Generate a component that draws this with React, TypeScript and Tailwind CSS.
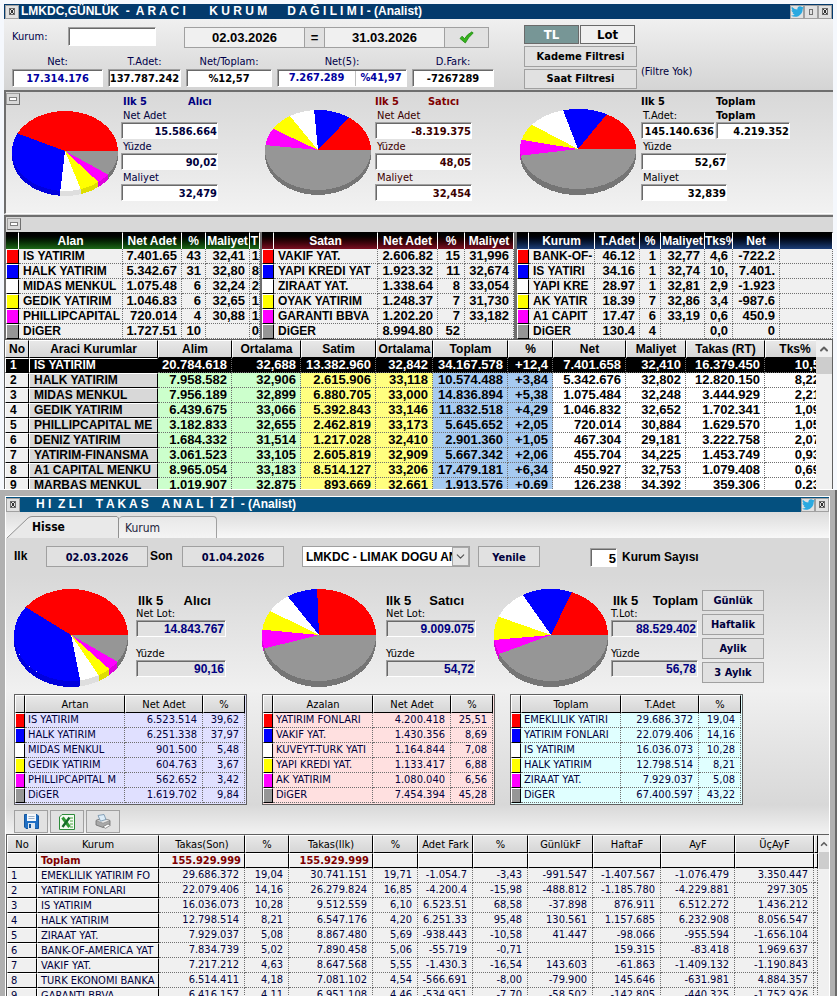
import React, { useState } from 'react';
import { FaTwitter } from 'react-icons/fa';
import { ChevronDown, ChevronUp } from 'lucide-react';

type Row = string[];

const sliceColors = ['#ff0000', '#0000ff', '#ffffff', '#ffff00', '#ff00ff', '#969696'];
const rimColors = ['#dd0000', '#0000dd', '#dedede', '#dede00', '#dd00dd', '#757575'];
const swatches = ['bg-[#ff0000]', 'bg-[#0000ff]', 'bg-white', 'bg-[#ffff00]', 'bg-[#ff00ff]', 'bg-[#969696]'];

const buyers: Row[] = [
  ['IS YATIRIM', '7.401.65', '43', '32,41', '1'],
  ['HALK YATIRIM', '5.342.67', '31', '32,80', '8'],
  ['MIDAS MENKUL', '1.075.48', '6', '32,24', '2'],
  ['GEDIK YATIRIM', '1.046.83', '6', '32,65', '1'],
  ['PHILLIPCAPITAL', '720.014', '4', '30,88', '1'],
  ['DiGER', '1.727.51', '10', '', '0'],
];

const sellers: Row[] = [
  ['VAKIF YAT.', '2.606.82', '15', '31,996'],
  ['YAPI KREDI YAT', '1.923.32', '11', '32,674'],
  ['ZIRAAT YAT.', '1.338.64', '8', '33,054'],
  ['OYAK YATIRIM', '1.248.37', '7', '31,730'],
  ['GARANTI BBVA', '1.202.20', '7', '33,182'],
  ['DiGER', '8.994.80', '52', ''],
];

const totals: Row[] = [
  ['BANK-OF-', '46.12', '1', '32,77', '4,6', '-722.2', ''],
  ['IS YATIRI', '34.16', '1', '32,74', '10,', '7.401.', ''],
  ['YAPI KRE', '28.97', '1', '32,81', '2,9', '-1.923', ''],
  ['AK YATIR', '18.39', '7', '32,86', '3,4', '-987.6', ''],
  ['A1 CAPIT', '17.47', '6', '33,19', '0,6', '450.9', ''],
  ['DiGER', '130.4', '4', '', '0,0', '0', ''],
];

const brokers: Row[] = [
  ['1', 'IS YATIRIM', '20.784.618', '32,688', '13.382.960', '32,842', '34.167.578', '+12,4', '7.401.658', '32,410', '16.379.450', '10,5'],
  ['2', 'HALK YATIRIM', '7.958.582', '32,906', '2.615.906', '33,118', '10.574.488', '+3,84', '5.342.676', '32,802', '12.820.150', '8,22'],
  ['3', 'MIDAS MENKUL', '7.956.189', '32,899', '6.880.705', '33,000', '14.836.894', '+5,38', '1.075.484', '32,248', '3.444.929', '2,21'],
  ['4', 'GEDIK YATIRIM', '6.439.675', '33,066', '5.392.843', '33,146', '11.832.518', '+4,29', '1.046.832', '32,652', '1.702.341', '1,09'],
  ['5', 'PHILLIPCAPITAL ME', '3.182.833', '32,655', '2.462.819', '33,173', '5.645.652', '+2,05', '720.014', '30,884', '1.629.570', '1,05'],
  ['6', 'DENIZ YATIRIM', '1.684.332', '31,514', '1.217.028', '32,410', '2.901.360', '+1,05', '467.304', '29,181', '3.222.758', '2,07'],
  ['7', 'YATIRIM-FINANSMA', '3.061.523', '33,105', '2.605.819', '32,909', '5.667.342', '+2,06', '455.704', '34,225', '1.453.749', '0,93'],
  ['8', 'A1 CAPITAL MENKU', '8.965.054', '33,183', '8.514.127', '33,206', '17.479.181', '+6,34', '450.927', '32,753', '1.079.408', '0,69'],
  ['9', 'MARBAS MENKUL', '1.019.907', '32,875', '893.669', '32,661', '1.913.576', '+0,69', '126.238', '34,392', '359.306', '0,23'],
];

const increased: Row[] = [
  ['IS YATIRIM', '6.523.514', '39,62'],
  ['HALK YATIRIM', '6.251.338', '37,97'],
  ['MIDAS MENKUL', '901.500', '5,48'],
  ['GEDIK YATIRIM', '604.763', '3,67'],
  ['PHILLIPCAPITAL M', '562.652', '3,42'],
  ['DiGER', '1.619.702', '9,84'],
];

const decreased: Row[] = [
  ['YATIRIM FONLARI', '4.200.418', '25,51'],
  ['VAKIF YAT.', '1.430.356', '8,69'],
  ['KUVEYT-TURK YATI', '1.164.844', '7,08'],
  ['YAPI KREDI YAT.', '1.133.417', '6,88'],
  ['AK YATIRIM', '1.080.040', '6,56'],
  ['DiGER', '7.454.394', '45,28'],
];

const holdings: Row[] = [
  ['EMEKLILIK YATIRI', '29.686.372', '19,04'],
  ['YATIRIM FONLARI', '22.079.406', '14,16'],
  ['IS YATIRIM', '16.036.073', '10,28'],
  ['HALK YATIRIM', '12.798.514', '8,21'],
  ['ZIRAAT YAT.', '7.929.037', '5,08'],
  ['DiGER', '67.400.597', '43,22'],
];

const custody: Row[] = [
  ['1', 'EMEKLILIK YATIRIM FO', '29.686.372', '19,04', '30.741.151', '19,71', '-1.054.7', '-3,43', '-991.547', '-1.407.567', '-1.076.479', '3.350.447', ''],
  ['2', 'YATIRIM FONLARI', '22.079.406', '14,16', '26.279.824', '16,85', '-4.200.4', '-15,98', '-488.812', '-1.185.780', '-4.229.881', '297.305', ''],
  ['3', 'IS YATIRIM', '16.036.073', '10,28', '9.512.559', '6,10', '6.523.51', '68,58', '-37.898', '876.911', '6.512.272', '1.436.212', ''],
  ['4', 'HALK YATIRIM', '12.798.514', '8,21', '6.547.176', '4,20', '6.251.33', '95,48', '130.561', '1.157.685', '6.232.908', '8.056.547', ''],
  ['5', 'ZIRAAT YAT.', '7.929.037', '5,08', '8.867.480', '5,69', '-938.443', '-10,58', '41.447', '-98.066', '-955.594', '-1.656.104', ''],
  ['6', 'BANK-OF-AMERICA YAT', '7.834.739', '5,02', '7.890.458', '5,06', '-55.719', '-0,71', '', '159.315', '-83.418', '1.969.637', ''],
  ['7', 'VAKIF YAT.', '7.217.212', '4,63', '8.647.568', '5,55', '-1.430.3', '-16,54', '143.603', '-61.863', '-1.409.132', '-1.190.843', ''],
  ['8', 'TURK EKONOMI BANKA', '6.514.411', '4,18', '7.081.102', '4,54', '-566.691', '-8,00', '-79.900', '145.646', '-631.981', '4.884.357', ''],
  ['9', 'GARANTI BBVA', '6.416.157', '4,11', '6.951.108', '4,46', '-534.951', '-7,70', '-58.502', '-142.805', '-440.325', '-1.752.926', ''],
];

interface PieProps {
  values: number[];
  rx: number;
  ry: number;
  depth: number;
}

// Tilted pie, slices run counterclockwise from three o'clock
const Pie: React.FC<PieProps> = ({ values, rx, ry, depth }) => {
  const sum = values.reduce((a, b) => a + b, 0);
  const pt = (a: number, dy = 0) => `${(rx + rx * Math.cos(a)).toFixed(2)} ${(ry - ry * Math.sin(a) + dy).toFixed(2)}`;
  let angle = 0;
  const slices = values.map((v, i) => {
    const from = angle;
    angle += (v / sum) * Math.PI * 2;
    const to = angle;
    const large = to - from > Math.PI ? 1 : 0;
    const rimFrom = Math.max(from, Math.PI);
    return {
      face: `M${rx} ${ry} L${pt(from)} A${rx} ${ry} 0 ${large} 0 ${pt(to)} Z`,
      rim:
        to > Math.PI
          ? `M${pt(rimFrom)} A${rx} ${ry} 0 0 0 ${pt(to)} L${pt(to, depth)} A${rx} ${ry} 0 0 1 ${pt(rimFrom, depth)} Z`
          : '',
      color: sliceColors[i],
      rimColor: rimColors[i],
    };
  });

  return (
    <svg width={rx * 2} height={ry * 2 + depth} className="shrink-0" shapeRendering="crispEdges" aria-hidden="true">
      {slices.map((s) => s.rim && <path key={s.color} d={s.rim} fill={s.rimColor} />)}
      {slices.map((s) => (
        <path key={s.color} d={s.face} fill={s.color} />
      ))}
    </svg>
  );
};

const sunken = 'border border-t-[#a0a0a0] border-l-[#a0a0a0] border-b-white border-r-white shadow-[inset_1px_1px_0_#696969] pt-px';
const flatButton = 'border border-[#a0a0a0] bg-[#e1e1e1]';

const WindowButton: React.FC<{ label: string; children: React.ReactNode }> = ({ label, children }) => (
  <button aria-label={label} className="flex h-[14px] w-[14px] items-center justify-center border border-[#a0a0a0] bg-[#e1e1e1]">
    {children}
  </button>
);

const CloseGlyph = () => (
  <svg width="6" height="7" viewBox="0 0 6 7" shapeRendering="crispEdges">
    <rect x="0.5" y="0.5" width="5" height="6" fill="none" stroke="#6b6b6b" />
    <path d="M1 1L5 6M5 1L1 6" stroke="#333" strokeWidth="1" />
  </svg>
);

const CollapseButton = () => (
  <button aria-label="Daralt" className="flex h-[12px] w-[14px] items-center justify-center border border-t-[#a0a0a0] border-l-[#a0a0a0] border-b-[#707070] border-r-[#707070] bg-[#d8d8d8]">
    <span className="h-[4px] w-[8px] border border-[#808080] bg-white" />
  </button>
);

interface FieldProps {
  label: string;
  value: string;
  width: string;
  tone?: string;
}

const TopField: React.FC<FieldProps> = ({ label, value, width, tone = 'text-black' }) => (
  <label className={`flex flex-col items-center ${width}`}>
    <span className="h-[15px] text-[11px] leading-[16px] text-[#00004a]">{label}</span>
    <input readOnly value={value} className={`h-[18px] w-full bg-white text-center text-[11px] font-bold ${sunken} ${tone}`} />
  </label>
);

const StatField: React.FC<FieldProps> = ({ label, value, width, tone = 'text-black' }) => (
  <label className={`flex flex-col ${width} ${tone}`}>
    <span className="h-[14px] pl-[2px] text-[11px] leading-[16px]">{label}</span>
    <input readOnly value={value} className={`h-[17px] w-full bg-white text-right text-[11px] font-bold ${sunken}`} />
  </label>
);

const LotField: React.FC<FieldProps> = ({ label, value, width }) => (
  <label className={`flex flex-col ${width}`}>
    <span className="h-[14px] text-[11px] leading-[16px] text-black">{label}</span>
    <input readOnly value={value} className={`h-[17px] w-full bg-[#e1e1e1] pr-px text-right font-['Liberation_Sans',sans-serif] text-[12px] font-bold text-[#000080] ${sunken}`} />
  </label>
);

const ScrollBar: React.FC<{ width: string }> = ({ width }) => (
  <div className={`flex shrink-0 flex-col overflow-hidden bg-[#f0f0f0] ${width}`} aria-hidden="true">
    <div className="flex h-[17px] shrink-0 items-center justify-center">
      <ChevronUp size={12} strokeWidth={4} color="#606060" />
    </div>
    <div className="h-[17px] shrink-0 bg-[#cdcdcd]" />
  </div>
);

interface TopGridProps {
  heads: string[];
  cols: string[];
  rows: Row[];
  headClass: string;
}

const TopGrid: React.FC<TopGridProps> = ({ heads, cols, rows, headClass }) => (
  <table className="w-full table-fixed border-separate border-spacing-0 whitespace-nowrap bg-[#f0f0f0] font-['Liberation_Sans',sans-serif] font-bold text-black">
    <colgroup>
      {cols.map((c, i) => (
        <col key={i} className={c} />
      ))}
    </colgroup>
    <thead>
      <tr>
        <th className={`h-[17px] border-r border-t border-r-white border-t-black bg-linear-to-b p-0 ${headClass}`} />
        {heads.map((h, i) => (
          <th key={i} className={`h-[17px] overflow-hidden border-r border-t border-r-white border-t-black bg-linear-to-b p-0 text-[12px] leading-[15px] text-white ${headClass}`}>
            {h}
          </th>
        ))}
      </tr>
    </thead>
    <tbody>
      {rows.map((row, r) => (
        <tr key={r}>
          <td className={`border-b border-r border-l border-t border-black border-l-white border-t-white p-0 ${swatches[r]}`} />
          {row.map((cell, i) => (
            <td
              key={i}
              className={`h-[15px] overflow-hidden border-b border-r border-dotted border-[#707070] p-0 leading-[14px] ${
                i === 0 ? 'pl-1 text-left text-[12px]' : heads[i] === 'T' ? 'text-right text-[13px]' : 'pr-1 text-right text-[13px]'
              }`}
            >
              {cell}
            </td>
          ))}
        </tr>
      ))}
    </tbody>
  </table>
);

const brokerHeads = ['No', 'Araci Kurumlar', 'Alim', 'Ortalama', 'Satim', 'Ortalama', 'Toplam', '%', 'Net', 'Maliyet', 'Takas (RT)', 'Tks%'];
const brokerCols = ['w-[24px]', 'w-[129px]', 'w-[74px]', 'w-[69px]', 'w-[75px]', 'w-[57px]', 'w-[75px]', 'w-[45px]', 'w-[73px]', 'w-[60px]', 'w-[79px]', 'w-[60px]'];
const brokerFills = ['bg-[#f0f0f0]', 'bg-[#d8d8d8]', 'bg-[#ccffcc]', 'bg-[#ccffcc]', 'bg-[#ffff80]', 'bg-[#ffff80]', 'bg-[#a6caf0]', 'bg-[#a6caf0]', 'bg-white', 'bg-white', 'bg-white', 'bg-white'];

const headCell = 'h-[18px] overflow-hidden border-b border-r border-l border-t border-black border-l-white border-t-white bg-linear-to-b from-[#e8e8e8] to-[#d6d6d6] p-0';

const BrokerGrid = () => (
  <div className="flex h-[150px] overflow-hidden border-l border-r border-t border-[#606060] bg-white">
    <div className="min-w-0 flex-1 overflow-hidden">
      <table className="w-full min-w-[820px] table-fixed border-separate border-spacing-0 whitespace-nowrap font-['Liberation_Sans',sans-serif] font-bold text-black">
        <colgroup>
          {brokerCols.map((c, i) => (
            <col key={i} className={c} />
          ))}
        </colgroup>
        <thead>
          <tr>
            {brokerHeads.map((h, i) => (
              <th key={i} className={`text-[12px] leading-[15px] ${headCell}`}>
                {h}
              </th>
            ))}
          </tr>
        </thead>
        <tbody>
          {brokers.map((row, r) => (
            <tr key={row[0]}>
              {row.map((cell, i) => {
                const fill = r === 0 ? 'bg-black text-white' : brokerFills[i];
                return i < 2 ? (
                  <td key={i} className={`h-[15px] overflow-hidden border-b border-r border-l border-t border-black border-l-white border-t-white p-0 pl-1 text-[12px] leading-[13px] ${fill}`}>
                    {cell}
                  </td>
                ) : (
                  <td key={i} className={`h-[15px] overflow-hidden border-b border-r border-dotted border-[#707070] p-0 pr-1 text-right text-[13px] leading-[14px] ${fill}`}>
                    {cell}
                  </td>
                );
              })}
            </tr>
          ))}
        </tbody>
      </table>
    </div>
    <ScrollBar width="w-[16px]" />
  </div>
);

interface SmallGridProps {
  heads: string[];
  rows: Row[];
  fill: string;
}

const SmallGrid: React.FC<SmallGridProps> = ({ heads, rows, fill }) => (
  <div className={`w-[233px] border border-[#606060] pb-px pr-px ${fill}`}>
    <table className="w-full table-fixed border-separate border-spacing-0 whitespace-nowrap text-[11px] text-[#00003c]">
      <colgroup>
        <col className="w-[10px]" />
        <col className="w-[100px]" />
        <col className="w-[78px]" />
        <col className="w-[42px]" />
      </colgroup>
      <thead>
        <tr>
          <th className={headCell} />
          {heads.map((h) => (
            <th key={h} className={`font-normal leading-[15px] text-black ${headCell}`}>
              {h}
            </th>
          ))}
        </tr>
      </thead>
      <tbody>
        {rows.map((row, r) => (
          <tr key={row[0]}>
            <td className={`border-b border-r border-l border-t border-black border-l-white border-t-white p-0 ${swatches[r]}`} />
            {row.map((cell, i) => (
              <td key={i} className={`h-[15px] overflow-hidden border-b border-r border-dotted border-[#707070] p-0 leading-[14px] ${i === 0 ? 'pl-[3px]' : 'pr-[5px] text-right'}`}>
                {cell}
              </td>
            ))}
          </tr>
        ))}
      </tbody>
    </table>
  </div>
);

const custodyHeads = ['No', 'Kurum', 'Takas(Son)', '%', 'Takas(Ilk)', '%', 'Adet Fark', '%', 'GünlükF', 'HaftaF', 'AyF', 'ÜçAyF', ''];
const custodyCols = ['w-[30px]', 'w-[122px]', 'w-[86px]', 'w-[44px]', 'w-[84px]', 'w-[45px]', 'w-[55px]', 'w-[55px]', 'w-[65px]', 'w-[68px]', 'w-[74px]', 'w-[79px]', 'w-[4px]'];
const custodyTotal: Row = ['', 'Toplam', '155.929.999', '', '155.929.999', '', '', '', '', '', '', '', ''];

const CustodyGrid = () => (
  <div className="flex min-h-0 flex-1 overflow-hidden border-l border-t border-[#606060] bg-[#f0f0f0]">
    <div className="min-w-0 flex-1">
      <table className="w-full table-fixed border-separate border-spacing-0 whitespace-nowrap text-[11px] text-[#00003c]">
        <colgroup>
          {custodyCols.map((c, i) => (
            <col key={i} className={c} />
          ))}
        </colgroup>
        <thead>
          <tr>
            {custodyHeads.map((h, i) => (
              <th key={i} className={`font-normal leading-[15px] text-black ${headCell}`}>
                {h}
              </th>
            ))}
          </tr>
        </thead>
        <tbody>
          <tr className="font-bold text-[#800000]">
            {custodyTotal.map((cell, i) => (
              <td key={i} className={`h-[15px] overflow-hidden border-b border-r border-l border-t border-black border-l-white border-t-white p-0 leading-[13px] ${i < 2 ? 'pl-[3px]' : 'pr-[3px] text-right'}`}>
                {cell}
              </td>
            ))}
          </tr>
          {custody.map((row) => (
            <tr key={row[0]}>
              {row.map((cell, i) =>
                i < 2 ? (
                  <td key={i} className="h-[15px] overflow-hidden border-b border-r border-l border-t border-black border-l-white border-t-white p-0 pl-[3px] leading-[13px]">
                    {cell}
                  </td>
                ) : (
                  <td key={i} className="h-[15px] overflow-hidden border-b border-r border-dotted border-[#707070] p-0 pr-[5px] text-right leading-[14px]">
                    {cell}
                  </td>
                )
              )}
            </tr>
          ))}
        </tbody>
      </table>
    </div>
    <div className="w-px shrink-0" />
    <ScrollBar width="w-[10px]" />
  </div>
);

const BrokerWindow = () => {
  const [unit, setUnit] = useState('TL');

  return (
    <section className="mx-1 mt-1 border-b border-white bg-[#d8d8d8]">
      <header className="flex h-[15px] items-center bg-[#033a6c] px-px">
        <WindowButton label="Kapat">
          <CloseGlyph />
        </WindowButton>
        <h1 className="flex-1 whitespace-pre pl-[2px] font-['Liberation_Sans',sans-serif] text-[12px] font-bold leading-[15px] text-white">
          {'LMKDC,GÜNLÜK  -  A R A C I       K U R U M      D A Ğ I L I M I - (Analist)'}
        </h1>
        <WindowButton label="Paylaş">
          <FaTwitter size={13} color="#2aa9e0" className="shrink-0" />
        </WindowButton>
        <WindowButton label="Büyüt">
          <span className="h-[6px] w-[4px] border border-[#707070]" />
        </WindowButton>
        <WindowButton label="Pencereyi kapat">
          <CloseGlyph />
        </WindowButton>
      </header>

      {/* Query bar */}
      <div className="flex h-[71px] bg-linear-to-b from-[#f0f0f0] to-[#d4d4d4] pl-2 pt-[6px]">
        <div className="w-[512px] pt-[2px]">
          <div className="flex h-[21px]">
            <label className="flex w-[172px] text-[11px] text-[#00004a]">
              <span className="w-[56px] leading-[19px]">Kurum:</span>
              <input className={`h-[19px] w-[88px] bg-white px-1 ${sunken}`} />
            </label>
            <div className="flex font-['Liberation_Sans',sans-serif] text-[13px] font-bold text-black">
              <button className="w-[121px] border border-[#a0a0a0] bg-[#f0f0f0]">02.03.2026</button>
              <button className="w-[19px] border-y border-[#a0a0a0] bg-[#e1e1e1]">=</button>
              <button className="w-[121px] border border-[#a0a0a0] bg-[#f0f0f0]">31.03.2026</button>
              <button aria-label="Uygula" className="flex w-[44px] items-center justify-center border-y border-r border-[#a0a0a0] bg-[#e1e1e1]">
                <svg width="15" height="13" viewBox="0 0 15 13">
                  <path d="M1 7.5L3 5.2L5.6 7.6Q8.5 3 13 0.8L14.2 2Q9.2 6.4 6.3 12Z" fill="#35b21c" stroke="#1f8a10" strokeWidth="0.8" />
                </svg>
              </button>
            </div>
          </div>
          <div className="flex pt-[6px]">
            <TopField label="Net:" value="17.314.176" width="w-[91px]" tone="text-[#0000a0]" />
            <div className="w-[5px]" />
            <TopField label="T.Adet:" value="137.787.242" width="w-[73px]" />
            <div className="w-[5px]" />
            <TopField label="Net/Toplam:" value="%12,57" width="w-[86px]" />
            <div className="w-[5px]" />
            <div className="w-[130px] text-center">
              <label htmlFor="net5" className="block h-[15px] text-[11px] leading-[16px] text-[#00004a]">
                Net(5):
              </label>
              <div className={`flex h-[18px] bg-white text-[11px] font-bold text-[#0000a0] ${sunken}`}>
                <input id="net5" readOnly value="7.267.289" className="w-[78px] border-r border-[#c0c0c0] text-center" />
                <input aria-label="Net(5) yüzde" readOnly value="%41,97" className="w-[50px] text-center" />
              </div>
            </div>
            <div className="w-[5px]" />
            <TopField label="D.Fark:" value="-7267289" width="w-[82px]" />
          </div>
        </div>
        <div className="flex w-[113px] flex-col text-[11px] font-bold text-black">
          <div className="flex h-[19px] gap-px text-[13px] leading-[17px]">
            <button
              onClick={() => setUnit('TL')}
              className={`w-[55px] border border-[#6a6a6a] ${unit === 'TL' ? 'bg-[#779696] text-white' : 'bg-[#f0f0f0]'}`}
            >
              TL
            </button>
            <button
              onClick={() => setUnit('Lot')}
              className={`w-[55px] border border-[#6a6a6a] ${unit === 'Lot' ? 'bg-[#779696] text-white' : 'bg-[#f0f0f0]'}`}
            >
              Lot
            </button>
          </div>
          <button className={`mt-[2px] h-[21px] pt-px ${flatButton}`}>Kademe Filtresi</button>
          <button className={`mt-[2px] h-[20px] pt-px ${flatButton}`}>Saat Filtresi</button>
        </div>
        <span className="pl-1 pt-10 text-[11px] leading-[14px] text-[#00003c]">(Filtre Yok)</span>
      </div>

      {/* Top five shares */}
      <div className="flex h-[124px] border-l-2 border-t-2 border-[#6e6e6e] bg-linear-to-b from-[#d8d8d8] to-[#f2f2f2] border-b border-b-white">
        <div className="w-[115px] pt-px">
          <CollapseButton />
          <div className="pl-[6px] pt-[6px]">
            <Pie values={[42.75, 30.86, 6.21, 6.05, 4.16, 9.98]} rx={53} ry={40} depth={5} />
          </div>
        </div>
        <div className="w-[144px] pt-[2px] text-[#000080]">
          <div className="flex h-[14px] gap-[41px] pl-[2px] text-[11px] font-bold leading-[15px]">
            <span>Ilk 5</span>
            <span>Alıcı</span>
          </div>
          <StatField label="Net Adet" value="15.586.664" width="w-[97px]" tone="text-[#00003c]" />
          <StatField label="Yüzde" value="90,02" width="w-[97px]" tone="text-[#00003c]" />
          <StatField label="Maliyet" value="32,479" width="w-[97px]" tone="text-[#00003c]" />
        </div>
        <div className="w-[110px] pt-[18px]">
          <Pie values={[15.06, 11.11, 7.73, 7.21, 6.94, 51.95]} rx={53} ry={40} depth={5} />
        </div>
        <div className="w-[145px] pt-[2px] text-[#800000]">
          <div className="flex h-[14px] gap-[29px] text-[11px] font-bold leading-[15px]">
            <span>Ilk 5</span>
            <span>Satıcı</span>
          </div>
          <StatField label="Net Adet" value="-8.319.375" width="w-[97px]" tone="text-[#3c0000]" />
          <StatField label="Yüzde" value="48,05" width="w-[97px]" tone="text-[#3c0000]" />
          <StatField label="Maliyet" value="32,454" width="w-[97px]" tone="text-[#3c0000]" />
        </div>
        <div className="w-[121px] pt-[17px]">
          <Pie values={[46.12, 34.16, 28.97, 18.39, 17.47, 130.4]} rx={58} ry={40} depth={6} />
        </div>
        <div className="w-[74px] pt-[2px] text-black">
          <div className="h-[14px] text-[11px] font-bold leading-[15px]">Ilk 5</div>
          <StatField label="T.Adet:" value="145.140.636" width="w-[74px]" />
          <StatField label="Yüzde" value="52,67" width="w-[86px]" />
          <StatField label="Maliyet" value="32,839" width="w-[86px]" />
        </div>
        <div className="w-[76px] pl-px pt-[2px] text-[11px] font-bold text-black">
          <div className="h-[14px] leading-[15px]">Toplam</div>
          <label className="block">
            <span className="block h-[14px] leading-[16px]">Toplam</span>
            <input readOnly value="4.219.352" className={`block h-[17px] w-[74px] bg-white text-right ${sunken}`} />
          </label>
        </div>
      </div>

      {/* Buyer, seller and total lists */}
      <div className="mt-px h-[124px] overflow-hidden border-l-2 border-t-2 border-[#6e6e6e]">
        <div className="h-[15px] pl-px pt-px">
          <CollapseButton />
        </div>
        <div className="flex">
          <div className="w-[254px]">
            <TopGrid
              heads={['Alan', 'Net Adet', '%', 'Maliyet', 'T']}
              cols={['w-[13px]', 'w-[104px]', 'w-[59px]', 'w-[24px]', 'w-[44px]', 'w-[10px]']}
              rows={buyers}
              headClass="from-black to-[#1d6a18]"
            />
          </div>
          <div className="w-[2px] bg-[#6e6e6e]" />
          <div className="w-[252px]">
            <TopGrid
              heads={['Satan', 'Net Adet', '%', 'Maliyet']}
              cols={['w-[12px]', 'w-[104px]', 'w-[60px]', 'w-[27px]', 'w-[49px]']}
              rows={sellers}
              headClass="from-black to-[#7d1022]"
            />
          </div>
          <div className="w-[3px] bg-[#6e6e6e]" />
          <div className="min-w-0 flex-1">
            <TopGrid
              heads={['Kurum', 'T.Adet', '%', 'Maliyet', 'Tks%', 'Net', '']}
              cols={['w-[12px]', 'w-[66px]', 'w-[45px]', 'w-[21px]', 'w-[44px]', 'w-[28px]', 'w-[47px]', '']}
              rows={totals}
              headClass="from-black to-[#1d3f7a]"
            />
          </div>
        </div>
      </div>
      <BrokerGrid />
    </section>
  );
};

const periods = ['Günlük', 'Haftalik', 'Aylik', '3 Aylık'];

interface LotBlockProps {
  side: string;
  lotLabel: string;
  lot: string;
  percent: string;
  headPad: string;
  width: string;
}

const LotBlock: React.FC<LotBlockProps> = ({ side, lotLabel, lot, percent, headPad, width }) => (
  <div className={`pt-[5px] ${width}`}>
    <div className={`flex h-[12px] justify-between font-['Liberation_Sans',sans-serif] text-[13px] font-bold leading-[14px] text-black ${headPad}`}>
      <span>Ilk 5</span>
      <span>{side}</span>
    </div>
    <LotField label={lotLabel} value={lot} width="w-full" />
    <div className="h-[9px]" />
    <LotField label="Yüzde" value={percent} width="w-full" />
  </div>
);

const CustodyWindow = () => (
  <section className="flex min-h-0 flex-1 flex-col border-r-2 border-[#696969]">
    <div className="flex min-h-0 flex-1 flex-col border-l-[5px] border-r-[5px] border-t-[6px] border-[#b0b0b0] bg-[#d8d8d8]">
      <div className="flex min-h-0 flex-1 flex-col border-l border-r border-t border-white">
        <header className="flex h-[15px] shrink-0 items-center bg-[#04507f]">
          <WindowButton label="Kapat">
            <CloseGlyph />
          </WindowButton>
          <h2 className="flex-1 whitespace-pre pl-[16px] font-['Liberation_Sans',sans-serif] text-[12px] font-bold leading-[15px] text-white">
            {'H I  Z L I    T A K A S    A N A L  İ  Z İ  - (Analist)'}
          </h2>
          <WindowButton label="Paylaş">
            <FaTwitter size={13} color="#2aa9e0" className="shrink-0" />
          </WindowButton>
          <WindowButton label="Pencereyi kapat">
            <CloseGlyph />
          </WindowButton>
        </header>

        {/* Tabs */}
        <div role="tablist" className="flex h-[26px] shrink-0 items-end bg-linear-to-b from-[#dcdcdc] to-[#f8f8f8]">
          <button role="tab" aria-selected="true" className="relative h-[22px] w-[113px] text-left text-[12px] font-bold text-black">
            <svg className="absolute inset-0 h-full w-full" viewBox="0 0 113 22" preserveAspectRatio="none">
              <path d="M1 22L22 2Q24 0.5 26 0.5H111L112.5 2V22" fill="#e9e9e9" stroke="#909090" />
            </svg>
            <span className="relative pl-[26px]">Hisse</span>
          </button>
          <button role="tab" aria-selected="false" className="h-[22px] w-[98px] rounded-t-sm border-r border-t border-[#a0a0a0] bg-linear-to-b from-[#e8e8e8] to-[#f4f4f4] pl-[6px] text-left text-[12px] text-[#1e1e3c]">
            Kurum
          </button>
        </div>

        {/* Date and symbol bar */}
        <div className="flex h-[37px] shrink-0 items-start pl-2 pt-2 font-['Liberation_Sans',sans-serif] text-[12px] font-bold leading-[21px] text-black">
          <span className="w-[32px]">Ilk</span>
          <button className={`h-[21px] w-[102px] font-['DejaVu_Sans_Condensed','DejaVu_Sans',sans-serif] text-[11px] text-[#00003c] ${flatButton}`}>02.03.2026</button>
          <span className="w-[34px] pl-[2px]">Son</span>
          <button className={`h-[21px] w-[102px] font-['DejaVu_Sans_Condensed','DejaVu_Sans',sans-serif] text-[11px] text-[#00003c] ${flatButton}`}>01.04.2026</button>
          <div className="w-[18px]" />
          <div className="relative h-[21px] w-[168px] border border-[#a0a0a0] bg-white">
            <select aria-label="Sembol" className="h-full w-[149px] appearance-none bg-white pl-[3px] text-[12px] font-bold">
              <option>LMKDC - LIMAK DOGU ANADOLU</option>
            </select>
            <span className="pointer-events-none absolute inset-y-0 right-0 flex w-[17px] items-center justify-center border border-[#a8a8a8] bg-[#e4e4e4]">
              <ChevronDown size={13} color="#505050" />
            </span>
          </div>
          <button className={`ml-2 h-[21px] w-[62px] font-['DejaVu_Sans_Condensed','DejaVu_Sans',sans-serif] text-[11px] text-[#00003c] ${flatButton}`}>Yenile</button>
          <label className="ml-[50px] flex items-center gap-[5px] pt-px">
            <input readOnly value="5" className={`h-[19px] w-[27px] bg-white text-right text-[13px] ${sunken}`} />
            <span>Kurum Sayısı</span>
          </label>
        </div>

        <div className="shrink-0 bg-linear-to-b from-[#d8d8d8] via-[#f0f0f0] to-[#d8d8d8] pl-2 pt-[14px]">
          <div className="flex h-[105px]">
            <div className="w-[122px]">
              <Pie values={[39.62, 37.97, 5.48, 3.67, 3.42, 9.84]} rx={57} ry={46} depth={6} />
            </div>
            <LotBlock side="Alıcı" lotLabel="Net Lot:" lot="14.843.767" percent="90,16" headPad="pl-[2px] pr-[15px]" width="w-[90px]" />
            <div className="w-[36px]" />
            <div className="w-[124px]">
              <Pie values={[25.51, 8.69, 7.08, 6.88, 6.56, 45.28]} rx={57} ry={46} depth={6} />
            </div>
            <LotBlock side="Satıcı" lotLabel="Net Lot:" lot="9.009.075" percent="54,72" headPad="pr-[12px]" width="w-[90px]" />
            <div className="w-[18px]" />
            <div className="w-[117px]">
              <Pie values={[19.04, 14.16, 10.28, 8.21, 5.08, 43.22]} rx={57} ry={46} depth={6} />
            </div>
            <LotBlock side="Toplam" lotLabel="T.Lot:" lot="88.529.402" percent="56,78" headPad="pl-[2px]" width="w-[87px]" />
            <div className="flex flex-col gap-[3px] pl-1 pt-px">
              {periods.map((p) => (
                <button key={p} className={`h-[21px] w-[62px] pt-px text-[11px] font-bold text-[#00003c] ${flatButton}`}>
                  {p}
                </button>
              ))}
            </div>
          </div>
          <div className="flex gap-[15px]">
            <SmallGrid heads={['Artan', 'Net Adet', '%']} rows={increased} fill="bg-[#e0e0ff]" />
            <SmallGrid heads={['Azalan', 'Net Adet', '%']} rows={decreased} fill="bg-[#ffe0e0]" />
            <SmallGrid heads={['Toplam', 'T.Adet', '%']} rows={holdings} fill="bg-[#e0ffff]" />
          </div>
        </div>

        {/* Export buttons */}
        <div className="flex h-[29px] shrink-0 gap-[2px] bg-linear-to-b from-[#d8d8d8] to-[#f2f2f2] pl-2 pt-[5px]">
          <button aria-label="Kaydet" className={`flex h-[23px] w-[34px] items-center justify-center ${flatButton}`}>
            <svg width="15" height="15" viewBox="0 0 15 15">
              <path d="M0.5 0.5H13L14.5 2V14.5H2L0.5 13Z" fill="#1f6fc4" stroke="#15569c" />
              <rect x="3" y="0" width="9" height="7" fill="#f4f8fc" />
              <path d="M4.5 2.5H10.5M4.5 4.5H10.5" stroke="#9ab0c8" />
              <rect x="4" y="9" width="7" height="6" fill="#dce6f0" />
              <rect x="5" y="10" width="2" height="4" fill="#15569c" />
            </svg>
          </button>
          <button aria-label="Excel" className={`flex h-[23px] w-[34px] items-center justify-center ${flatButton}`}>
            <svg width="16" height="16" viewBox="0 0 16 16">
              <path d="M3 0.5H15.5V15.5H0.5V3Z" fill="#f4faf2" stroke="#2d8a3a" />
              <path d="M12.5 3V14" stroke="#9fd09a" strokeWidth="3" strokeDasharray="2 1" />
              <path d="M3.5 3.5L10.5 13" stroke="#2f9a34" strokeWidth="3" />
              <path d="M10.5 3.5L3.5 13" stroke="#176b2a" strokeWidth="2.4" />
            </svg>
          </button>
          <button aria-label="Yazdır" className={`flex h-[23px] w-[34px] items-center justify-center ${flatButton}`}>
            <svg width="16" height="15" viewBox="0 0 16 15">
              <path d="M1 6.5L6 4.5L15 6.5V10.5L8 13.5L1 11Z" fill="#a8a8a8" stroke="#6c6c6c" strokeWidth="0.8" />
              <path d="M1 6.5L8 9.2L15 6.5L9 4.5Z" fill="#e8e8e8" stroke="#808080" strokeWidth="0.6" />
              <path d="M3 1.5L9 0.5L11 5.5L5.5 7.2Z" fill="#dcecf8" stroke="#6f8ea8" strokeWidth="0.8" />
              <path d="M8 12.8L13 10L15.5 11.2L10.5 14.3Z" fill="#ffffff" stroke="#707070" strokeWidth="0.7" />
            </svg>
          </button>
        </div>
        <CustodyGrid />
      </div>
    </div>
  </section>
);

const App: React.FC = () => (
  <main className="flex h-screen flex-col overflow-hidden bg-[#f5f8fd] font-['DejaVu_Sans_Condensed','DejaVu_Sans',sans-serif]">
    <BrokerWindow />
    <CustodyWindow />
  </main>
);

export default App;
